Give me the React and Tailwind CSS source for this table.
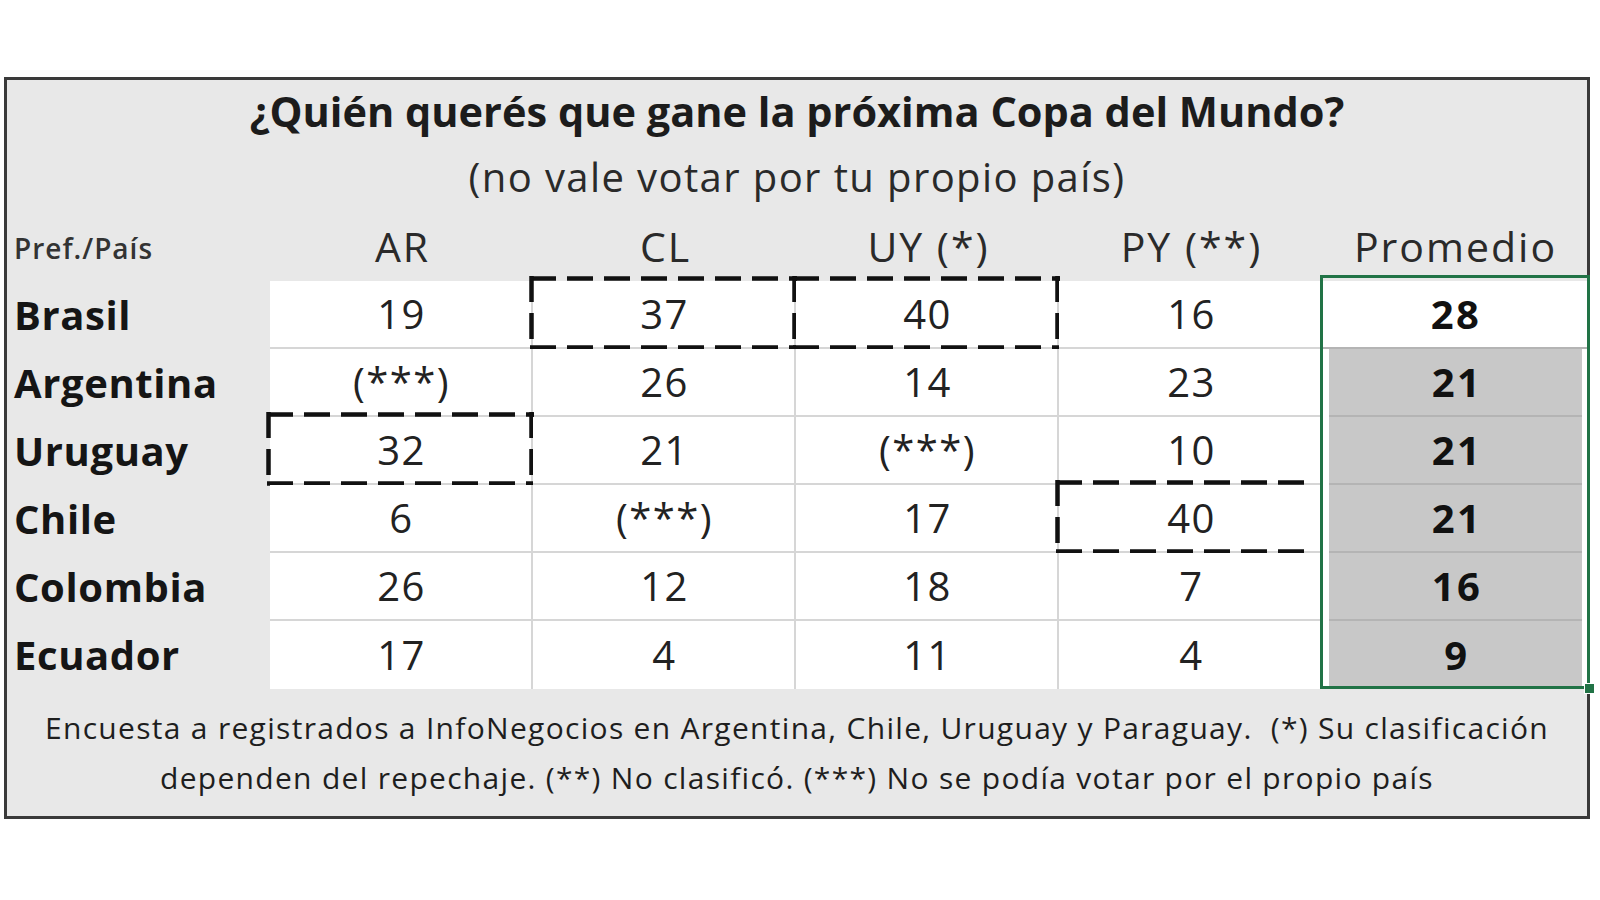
import React from "react";

const FONT = { fontFamily: "'Open Sans', Lato, sans-serif" };

const cols = ["AR", "CL", "UY (*)", "PY (**)"];
const rows = [
  { name: "Brasil", vals: ["19", "37", "40", "16"], avg: "28" },
  { name: "Argentina", vals: ["(***)", "26", "14", "23"], avg: "21" },
  { name: "Uruguay", vals: ["32", "21", "(***)", "10"], avg: "21" },
  { name: "Chile", vals: ["6", "(***)", "17", "40"], avg: "21" },
  { name: "Colombia", vals: ["26", "12", "18", "7"], avg: "16" },
  { name: "Ecuador", vals: ["17", "4", "11", "4"], avg: "9" },
];

const dashed = {
  "0-1": { t: 1, r: 1, b: 1, l: 1 },
  "0-2": { t: 1, r: 1, b: 1, l: 0 },
  "2-0": { t: 1, r: 1, b: 1, l: 1 },
  "3-3": { t: 1, r: 0, b: 1, l: 1, short: 1 },
};

function HLine({ className }) {
  return (
    <svg className={"absolute h-[5px] overflow-visible " + className}>
      <line x1="0" y1="2.5" x2="100%" y2="2.5" stroke="#111" strokeWidth="4.5" strokeDasharray="26 11" />
    </svg>
  );
}
function VLine({ className }) {
  return (
    <svg className={"absolute w-[5px] overflow-visible " + className}>
      <line x1="2.5" y1="0" x2="2.5" y2="100%" stroke="#111" strokeWidth="4.5" strokeDasharray="26 11" />
    </svg>
  );
}

function DashBox({ e }) {
  const w = e.short ? "w-[calc(100%-9px)]" : "w-[calc(100%+6px)]";
  return (
    <>
      {e.t ? <HLine className={"left-[-3px] top-[-5px] " + w} /> : null}
      {e.b ? <HLine className={"left-[-3px] bottom-[-3px] " + w} /> : null}
      {e.l ? <VLine className="top-[-5px] left-[-4px] h-[calc(100%+8px)]" /> : null}
      {e.r ? <VLine className="top-[-5px] right-[-3px] h-[calc(100%+8px)]" /> : null}
    </>
  );
}

export default function App() {
  return (
    <div className="w-[1600px] h-[900px] bg-white overflow-hidden" style={FONT}>
      <div className="ml-[4px] mt-[77px] w-[1586px] h-[742px] border-[3px] border-[#3a3a3a] bg-[#e8e8e8] relative">
        {/* title */}
        <div className="h-[133px] flex flex-col items-center">
          <div className="mt-[6px] h-[50px] leading-[50px] text-[41.5px] font-bold text-[#1c1c1c]">
            ¿Quién querés que gane la próxima Copa del Mundo?
          </div>
          <div className="mt-[18px] h-[46px] leading-[46px] text-[40px] tracking-[1.4px] text-[#2a2a2a]">
            (no vale votar por tu propio país)
          </div>
        </div>

        {/* header row */}
        <div className="grid grid-cols-[263px_263px_263px_263px_263px_265px] h-[68px] items-center">
          <div className="pl-[7px] pt-[2px] text-[28px] tracking-[1px] font-semibold text-[#333]">Pref./País</div>
          {cols.map((c) => (
            <div key={c} className="text-center pl-[2px] text-[41px] tracking-[2px] text-[#2a2a2a]">{c}</div>
          ))}
          <div className="text-center pl-[2px] text-[41px] tracking-[2px] text-[#2a2a2a]">Promedio</div>
        </div>

        {/* data rows */}
        <div className="relative">
          {rows.map((r, ri) => (
            <div key={r.name} className="grid grid-cols-[263px_263px_263px_263px_263px_265px] h-[68px]">
              <div className="pl-[7px] flex items-center text-[40px] tracking-[0.6px] font-bold text-[#151515]">{r.name}</div>
              {r.vals.map((v, ci) => (
                <div
                  key={ci}
                  className={
                    "relative bg-white flex items-center justify-center pl-[2px] text-[40px] tracking-[1.5px] text-[#222] " +
                    (ci < 3 ? "border-r-2 border-r-[#d6d6d6] " : "") +
                    (ri < 5 ? "border-b-2 border-b-[#d6d6d6]" : "")
                  }
                >
                  {v}
                  {dashed[ri + "-" + ci] ? <DashBox e={dashed[ri + "-" + ci]} /> : null}
                </div>
              ))}
              <div className={"bg-white flex " + (ri === 0 ? "" : "pl-[7px] pr-[5px]")}>
                <div
                  className={
                    "flex-1 flex items-center justify-center pl-[3px] text-[40px] tracking-[2.5px] font-bold text-[#111] " +
                    (ri === 0 ? "bg-white " : "bg-[#c8c8c8] ") +
                    (ri < 5 ? "border-b-2 border-b-[#b4b4b4]" : "")
                  }
                >
                  {r.avg}
                </div>
              </div>
            </div>
          ))}
          <div className="absolute left-[1313px] top-[-6px] w-[270px] h-[414px] border-[3px] border-[#217346] pointer-events-none" />
          <div className="absolute left-[1577px] top-[402px] w-[11px] h-[11px] bg-[#217346] border border-white" />
        </div>

        {/* footer */}
        <div className="pt-[14px] text-center text-[30px] tracking-[1.3px] leading-[50px] text-[#1e1e1e]">
          <div>Encuesta a registrados a InfoNegocios en Argentina, Chile, Uruguay y Paraguay.&nbsp;&nbsp;(*) Su clasificación</div>
          <div>dependen del repechaje. (**) No clasificó. (***) No se podía votar por el propio país</div>
        </div>
      </div>
    </div>
  );
}
